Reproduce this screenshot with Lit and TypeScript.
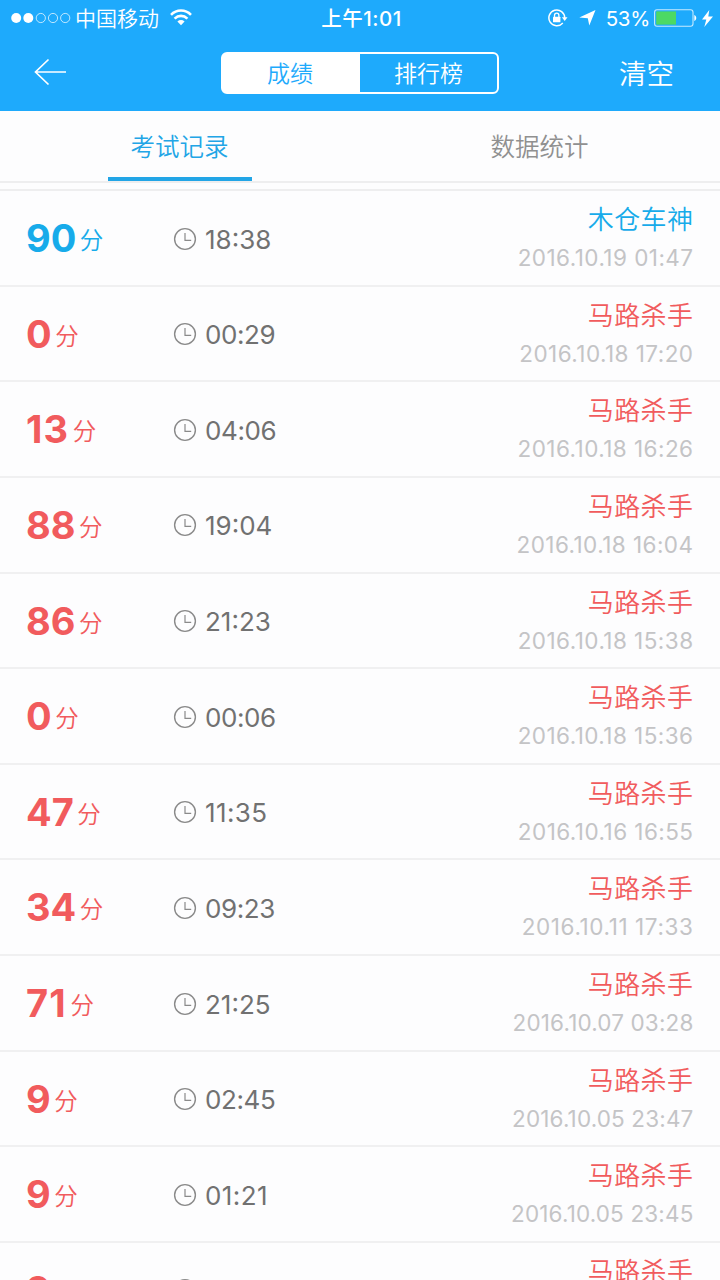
import { LitElement, html, css } from "lit";
import { customElement, property } from "lit/decorators.js";
import { classMap } from "lit/directives/class-map.js";
import { styleMap } from "lit/directives/style-map.js";

interface ExamRecord {
  score: number;
  time: string;
  title: string;
  date: string;
}

const KILLER = "马路杀手";

const RECORDS: ExamRecord[] = [
  { score: 90, time: "18:38", title: "木仓车神", date: "2016.10.19 01:47" },
  { score: 0, time: "00:29", title: KILLER, date: "2016.10.18 17:20" },
  { score: 13, time: "04:06", title: KILLER, date: "2016.10.18 16:26" },
  { score: 88, time: "19:04", title: KILLER, date: "2016.10.18 16:04" },
  { score: 86, time: "21:23", title: KILLER, date: "2016.10.18 15:38" },
  { score: 0, time: "00:06", title: KILLER, date: "2016.10.18 15:36" },
  { score: 47, time: "11:35", title: KILLER, date: "2016.10.16 16:55" },
  { score: 34, time: "09:23", title: KILLER, date: "2016.10.11 17:33" },
  { score: 71, time: "21:25", title: KILLER, date: "2016.10.07 03:28" },
  { score: 9, time: "02:45", title: KILLER, date: "2016.10.05 23:47" },
  { score: 9, time: "01:21", title: KILLER, date: "2016.10.05 23:45" },
  { score: 9, time: "01:05", title: KILLER, date: "2016.10.05 23:43" },
];

/** Tracking that evens out the narrow "1" of proportional figures. */
function tracking(text: string, perOne: number): Record<string, string> {
  const ones = text.split("1").length - 1;
  return { letterSpacing: `${((ones - 1) * perOne).toFixed(2)}px` };
}

@customElement("status-bar")
export class StatusBar extends LitElement {
  static styles = css`
    :host {
      display: grid;
      grid-template-columns: 1fr auto 1fr;
      height: 36px;
      padding: 0 8px 0 11px;
      color: #fff;
      font-size: 20px;
      line-height: 37px;
    }
    .left, .right { display: flex; align-items: center; height: 36px; }
    .right { justify-content: flex-end; }
    .dots { margin-right: 5px; }
    .wifi { margin-left: 11px; margin-top: -2px; }
    .carrier { font-size: 21px; font-weight: 350; margin-left: -1px; padding-top: 1px; }
    .clock { font-weight: 500; font-size: 20.5px; letter-spacing: 0.5px; }
    .lock { margin-right: 11px; }
    .arrow { margin-right: 10px; }
    .percent { font-size: 20.5px; margin-right: 4px; padding-top: 1px; letter-spacing: -0.3px; }
    .bolt { margin-left: 5px; }
    .right { margin-right: -1px; }
    svg { display: block; flex: none; }
  `;

  render() {
    return html`
      <div class="left">
        <svg class="dots" width="60" height="12" viewBox="0 0 60 12">
          <circle cx="5.2" cy="6" r="5" fill="#fff" />
          <circle cx="17.3" cy="6" r="5" fill="#fff" />
          <g fill="none" stroke="#fff" stroke-opacity=".7" stroke-width="1">
            <circle cx="29.8" cy="6" r="4.6" />
            <circle cx="42" cy="6" r="4.6" />
            <circle cx="54.2" cy="6" r="4.6" />
          </g>
        </svg>
        <span class="carrier">中国移动</span>
        <svg class="wifi" width="22" height="17" viewBox="0 0 22 17">
          <g fill="none" stroke="#fff" stroke-width="2.6">
            <path d="M1 5.8C6.6.1 15.4.1 21 5.8" />
            <path d="M4.6 9.6c3.7-3.6 9.1-3.6 12.8 0" />
          </g>
          <path fill="#fff" d="M7.4 12.4c2.2-1.9 5-1.9 7.2 0L11 16.2z" />
        </svg>
      </div>
      <div class="clock">上午1:01</div>
      <div class="right">
        <svg class="lock" width="20" height="18" viewBox="0 0 20 18">
          <path d="M14.8 14A7.9 7.9 0 1 1 16.7 9" fill="none" stroke="#fff" stroke-width="1.5" />
          <path d="M13.9 8.3h5.6l-2.8 3.6z" fill="#fff" />
          <rect x="5" y="7.7" width="7.4" height="5.6" rx=".6" fill="#fff" />
          <path d="M6.5 8V6.4a2.2 2.2 0 0 1 4.4 0V8" fill="none" stroke="#fff" stroke-width="1.3" />
        </svg>
        <svg class="arrow" width="17" height="16" viewBox="0 0 17 16">
          <path d="M16.5 0L10.3 15.5 8.8 8.3.3 7.6z" fill="#fff" />
        </svg>
        <span class="percent">53%</span>
        <svg width="43" height="18" viewBox="0 0 43 18">
          <rect x=".6" y=".8" width="38.4" height="16.4" rx="2.4" fill="none" stroke="#fff" stroke-opacity=".75" stroke-width="1.1" />
          <path d="M2.2 2.4H22v13.2H2.2z" fill="#4cd964" />
          <path d="M40.3 6c2.6.7 2.6 5.3 0 6z" fill="#fff" />
        </svg>
        <svg class="bolt" width="11" height="17" viewBox="0 0 11 17">
          <path d="M7.3 0L0 9.5h4.3L2.3 17 11 6.5H6.3z" fill="#fff" />
        </svg>
      </div>
    `;
  }
}

@customElement("nav-bar")
export class NavBar extends LitElement {
  static styles = css`
    :host {
      display: grid;
      grid-template-columns: 1fr 278px 1fr;
      align-items: center;
      height: 75px;
      color: #fff;
      font-weight: 350;
      line-height: 1;
    }
    .back { display: block; margin: -3px 0 0 34px; }
    .segments {
      display: grid;
      grid-template-columns: 1fr 1fr;
      box-sizing: border-box;
      height: 42px;
      margin-top: -1px;
      border: 2px solid #fff;
      border-radius: 6px;
      font-size: 23px;
      line-height: 40px;
      text-align: center;
    }
    .segments span { height: 38px; }
    .active { background: #fff; color: #1eaafc; text-indent: -3px; }
    .clear {
      justify-self: end;
      margin-right: 46px;
      padding-top: 2px;
      font-size: 27.5px;
    }
  `;

  render() {
    return html`
      <svg class="back" width="33" height="28" viewBox="0 0 33 28">
        <path d="M14.5 1.5L1.5 14l13 12.5M1.5 14H32" fill="none" stroke="#fff" stroke-width="1.7" />
      </svg>
      <div class="segments">
        <span class="active">成绩</span>
        <span>排行榜</span>
      </div>
      <span class="clear">清空</span>
    `;
  }
}

@customElement("record-row")
export class RecordRow extends LitElement {
  @property({ attribute: false }) record!: ExamRecord;

  static styles = css`
    :host { display: block; }
    .row {
      display: grid;
      grid-template-columns: 147px 1fr auto;
      box-sizing: border-box;
      height: 95.64px;
      padding: 0 27px 0 26px;
      border-bottom: 2px solid #f0f0f1;
      color: #f15b5d;
    }
    .pass { color: #17abea; }
    .score {
      display: flex;
      align-items: flex-start;
    }
    .value { font-size: 38px; font-weight: 700; line-height: 95px; }
    .has-one { letter-spacing: 1.2px; }
    .unit { font-size: 23.5px; font-weight: 350; line-height: 95px; margin: 2px 0 0 3.5px; }
    .time {
      display: flex;
      align-items: center;
      gap: 8px;
      padding-bottom: 1px;
      color: #717171;
      font-size: 26px;
    }
    .clock { margin-bottom: 1px; }
    .result { text-align: right; }
    .title { font-size: 26px; font-weight: 350; letter-spacing: 0.4px; line-height: 30px; margin: 14px -0.4px 0 0; }
    .date { color: #c4c4c6; font-size: 22.5px; line-height: 28px; margin: 9px -0.5px 0 0; }
  `;

  render() {
    const { score, time, title, date } = this.record;
    const value = String(score);
    return html`
      <div class=${classMap({ row: true, pass: score >= 90 })}>
        <div class="score">
          <span class=${classMap({ value: true, "has-one": value.includes("1") })}>${value}</span>
          <span class="unit">分</span>
        </div>
        <div class="time">
          <svg class="clock" width="24" height="24" viewBox="0 0 24 24" fill="none" stroke="#8a8a8a">
            <circle cx="12" cy="12" r="10.4" stroke-width="1.4" />
            <path d="M12 6v7.3h6.2" stroke-width="1.2" />
          </svg>
          <span style=${styleMap(tracking(time, 0.4))}>${time}</span>
        </div>
        <div class="result">
          <div class="title">${title}</div>
          <div class="date" style=${styleMap(tracking(date, 0.15))}>${date}</div>
        </div>
      </div>
    `;
  }
}

@customElement("app-root")
export class AppRoot extends LitElement {
  static styles = css`
    :host {
      display: flex;
      flex-direction: column;
      height: 1280px;
      overflow: hidden;
      background: #fdfdfe;
      font-family: Inter, "Noto Sans CJK SC", sans-serif;
      font-weight: 400;
    }
    .header { flex: none; background: #1eaafc; }
    .tabs {
      flex: none;
      display: grid;
      grid-template-columns: 1fr 1fr;
      justify-items: center;
      box-sizing: border-box;
      height: 72px;
      border-bottom: 2px solid #eeeeef;
      color: #909090;
      font-size: 24.5px;
      font-weight: 350;
      line-height: 73px;
      text-align: center;
      text-indent: -1px;
    }
    .tab { width: 144px; height: 66px; }
    .current { color: #22a5e6; border-bottom: 4px solid #22a5e6; }
    .list {
      flex: 1;
      min-height: 0;
      overflow: hidden;
      margin-top: 6px;
      border-top: 2px solid #eeeeef;
    }
  `;

  render() {
    return html`
      <div class="header">
        <status-bar></status-bar>
        <nav-bar></nav-bar>
      </div>
      <div class="tabs">
        <div class="tab current">考试记录</div>
        <div class="tab">数据统计</div>
      </div>
      <div class="list">
        ${RECORDS.map((record) => html`<record-row .record=${record}></record-row>`)}
      </div>
    `;
  }
}
